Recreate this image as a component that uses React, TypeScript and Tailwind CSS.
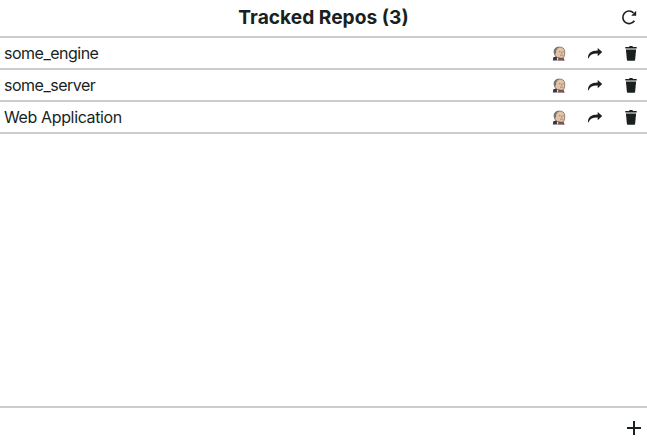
const repos = [
  { name: "some_engine", tracking: "tracking-[-0.5px]" },
  { name: "some_server", tracking: "tracking-[-0.49px]" },
  { name: "Web Application", tracking: "tracking-[-0.37px]" },
];

function Refresh() {
  return (
    <svg width="16" height="16" viewBox="0 0 16 16" fill="none">
      <path d="M13.400 11.800A6.300 6.300 0 1 1 12.500 3.800" stroke="#1a1f1f" strokeWidth="1.6" />
      <path d="M15.200 1.800v5h-5z" fill="#1a1f1f" />
    </svg>
  );
}

function Butler() {
  return (
    <svg width="14" height="16" viewBox="0 0 14 16">
      <path d="M.9 15.500l.3-3 3-1.300 6.300.8 2.300 3.500z" fill="#2b3944" />
      <path d="M2.200 7Q2 2.300 7 2q5.400 0 5.700 4.300.4 4-1 6.200L9.500 13.200 5.500 12.500 3 10.500z" fill="#e2c3a5" stroke="#746b64" strokeWidth=".8" />
      <path d="M2.500 10Q.8 5.500 3.100 3.500q2-1.700 4.600-1.300L6 3 4.300 5 4 8z" fill="#77736d" />
      <path d="M7 6.700h1.700M10.400 6.700h1.300M9.800 7v1.800M8 10.400q1.800-.6 3.200 0" stroke="#8b7565" strokeWidth=".7" fill="none" />
      <path d="M4.800 12.500l2 1-.6 2H5z" fill="#d9dadb" />
      <path d="M6.500 13l2.300.8 2.500-.8v2.500L9 14.800l-2.500.7z" fill="#c33c3d" />
    </svg>
  );
}

function Arrow() {
  return (
    <svg width="16" height="16" viewBox="0 0 16 16">
      <path d="M1 13.200C.8 8.500 4 5.600 10.700 5.600V2.900L15.200 7l-4.500 4.300V8.400C6 8.200 3.100 9.500 1.600 13.200z" fill="#1a1f1f" />
    </svg>
  );
}

function Trash() {
  return (
    <svg width="12" height="16" viewBox="0 0 12 16" fill="#1a1f1f">
      <path d="M.3 2h3.900v-.5q0-.6.6-.6h2.400q.6 0 .6.600V2h3.900v1.600H.3zM.9 4.500h10.200l-1 10.500q-.1.700-.8.700H2.700q-.7 0-.8-.7z" />
    </svg>
  );
}

export default function App() {
  return (
    <main className="flex h-[447px] w-full flex-col overflow-hidden bg-white font-['Inter','Liberation_Sans',sans-serif] text-[#1a1f1f]">
      <header className="grid h-[38px] shrink-0 grid-cols-[1fr_auto_1fr] border-b-2 border-[#cccccc]">
        <span />
        <h1 className="pt-[3px] text-[19.2px] leading-[28px] font-bold">Tracked Repos (3)</h1>
        <button aria-label="Refresh" className="flex justify-end pt-[9px] pr-[10px]"><Refresh /></button>
      </header>
      <ul className="grow">
        {repos.map((repo) => (
          <li key={repo.name} className="flex h-8 items-center border-b-2 border-[#cccccc] pl-1">
            <span className={`grow text-[16px] leading-6 ${repo.tracking}`}>{repo.name}</span>
            <div className="flex items-center pr-[10px]">
              <button aria-label="Build" className="mr-[21px]"><Butler /></button>
              <button aria-label="Open" className="mr-[22px]"><Arrow /></button>
              <button aria-label="Delete"><Trash /></button>
            </div>
          </li>
        ))}
      </ul>
      <footer className="flex h-[41px] shrink-0 justify-end border-t-2 border-[#cccccc] pt-[12px] pr-[5px]">
        <button aria-label="Add" className="h-4">
          <svg width="16" height="16" viewBox="0 0 16 16" stroke="#1a1f1f" strokeWidth="2">
            <path d="M8 1v14M1 8h14" />
          </svg>
        </button>
      </footer>
    </main>
  );
}
